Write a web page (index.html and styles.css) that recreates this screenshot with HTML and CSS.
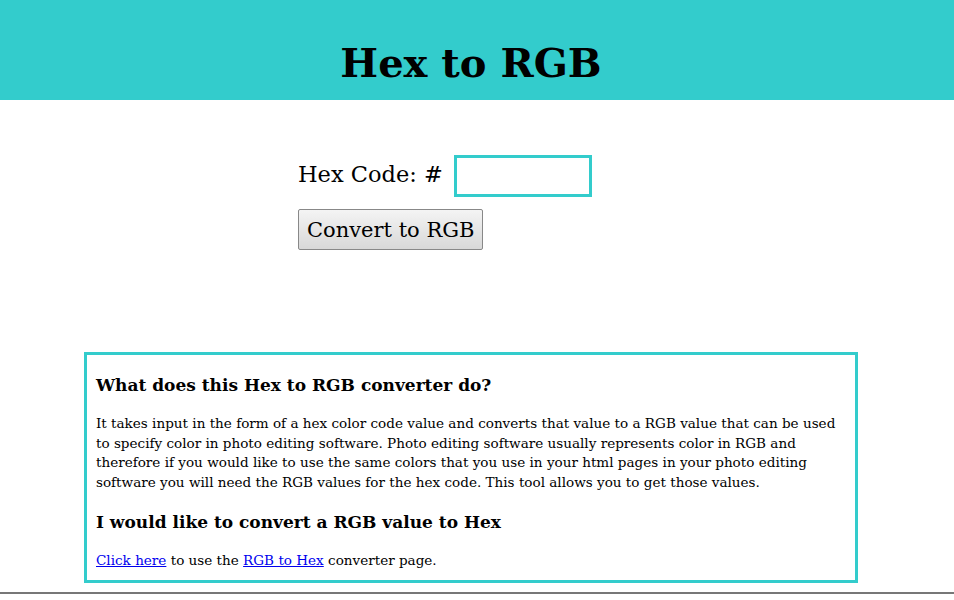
FILE: index.html
```html
<!DOCTYPE html>
<html lang="en">
<head>
    <meta charset="UTF-8">
    <meta name="viewport" content="width=device-width, initial-scale=1.0">
    <title>Hex to RGB</title>
    <link rel="stylesheet" href="styles.css">
</head>
<body>
    <div class="header">
        <h1>Hex to RGB</h1>
    </div>

    <div class="page">
        <!-- converter form -->
        <form class="converter" onsubmit="return false;">
            <div class="row">
                <label for="hex">Hex Code: #</label>
                <input type="text" id="hex" class="hex-input">
            </div>
            <button type="submit" class="convert-btn">Convert to RGB</button>
        </form>

        <!-- about box -->
        <div class="info">
            <h3>What does this Hex to RGB converter do?</h3>
            <p>It takes input in the form of a hex color code value and converts that value to a RGB value that can be used to specify color in photo editing software. Photo editing software usually represents color in RGB and therefore if you would like to use the same colors that you use in your html pages in your photo editing software you will need the RGB values for the hex code. This tool allows you to get those values.</p>
            <h3>I would like to convert a RGB value to Hex</h3>
            <p><a href="#">Click here</a> to use the <a href="#">RGB to Hex</a> converter page.</p>
        </div>
    </div>

    <div class="footer"></div>
</body>
</html>
```

FILE: styles.css
```css
body {
    margin: 0;
    font-family: "DejaVu Serif", Georgia, serif;
    color: #000;
    background-color: #fff;
}
.header {
    background-color: #33cccc;
    height: 100px;
    width: 942px;
    padding-right: 12px;
}
.header h1 {
    margin: 0;
    padding-top: 38px;
    text-align: center;
    font-size: 40px;
    line-height: 50px;
}
.page {
    width: 942px;
}
.converter {
    width: 346px;
    margin: 55px auto 0;
}
.row {
    display: flex;
    align-items: center;
    gap: 11px;
}
.row label {
    font-size: 22.5px;
    position: relative;
    top: -2px;
}
.hex-input {
    width: 132px;
    height: 36px;
    border: 3px solid #33cccc;
    padding: 0;
    font-size: 20px;
}
.convert-btn {
    margin-top: 12px;
    height: 41px;
    padding: 0 8px;
    font-family: "DejaVu Serif", Georgia, serif;
    font-size: 21px;
    border: 1px solid #888;
    border-radius: 2px;
    background: linear-gradient(#f4f4f4, #d8d8d8);
}
.info {
    width: 755px;
    margin: 102px 0 0 84px;
    border: 3px solid #33cccc;
    padding: 0 4px 0 9px;
}
.info h3 {
    font-size: 17px;
    line-height: 20px;
    margin: 20px 0 19px;
}
.info p {
    font-size: 13.55px;
    line-height: 19.5px;
    margin: 0 0 19px;
}
.info p:last-child {
    margin-bottom: 9px;
    margin-top: 1px;
}
.info a {
    color: #0000ee;
}
.footer {
    margin-top: 9px;
    border-top: 2px solid #777;
    height: 10px;
}
```
